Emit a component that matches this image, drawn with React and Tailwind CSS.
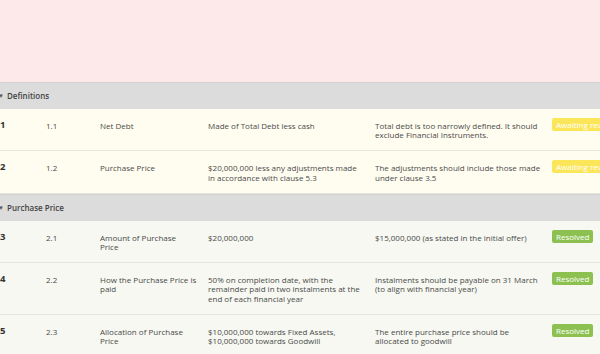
const groups = [
  {
    title: 'Definitions',
    tone: 'bg-[#fffdf0]',
    rows: [
      { n: 1, ref: '1.1', name: 'Net Debt', desc: 'Made of Total Debt less cash', comment: 'Total debt is too narrowly defined. It should exclude Financial Instruments.', status: 'awaiting' },
      { n: 2, ref: '1.2', name: 'Purchase Price', desc: '$20,000,000 less any adjustments made in accordance with clause 5.3', comment: 'The adjustments should include those made under clause 3.5', status: 'awaiting' },
    ],
  },
  {
    title: 'Purchase Price',
    tone: 'bg-[#f6f8f1]',
    rows: [
      { n: 3, ref: '2.1', name: 'Amount of Purchase\nPrice', desc: '$20,000,000', comment: '$15,000,000 (as stated in the initial offer)', status: 'resolved' },
      { n: 4, ref: '2.2', name: 'How the Purchase Price is\npaid', desc: '50% on completion date, with the remainder paid in two instalments at the end of each financial year', comment: 'Instalments should be payable on 31 March (to align with financial year)', status: 'resolved' },
      { n: 5, ref: '2.3', name: 'Allocation of Purchase\nPrice', desc: '$10,000,000 towards Fixed Assets, $10,000,000 towards Goodwill', comment: 'The entire purchase price should be allocated to goodwill', status: 'resolved' },
    ],
  },
]

export default function App() {
  return (
    <div className="w-[600px] h-[354px] overflow-hidden bg-[#fde9e9] text-[#4a4a4a] font-['Open_Sans',sans-serif]">
      <div className="h-[82px]" />
      {groups.map(g => (
        <div key={g.title}>
          <div className="h-[27px] flex items-center bg-[#dcdcdc] border-t border-[#d2d2d2] text-[8px] font-semibold text-[#444]">
            <span className="w-[7px] text-[6px] leading-none -ml-[2px] text-[#555]">▼</span>
            <span className="ml-[2px]">{g.title}</span>
          </div>
          {g.rows.map(r => (
            <div key={r.n} className={`grid grid-cols-[46px_54px_108px_167px_177px_1fr] ${g.tone} border-b border-[#e6e6dc] pt-[12px] pb-[11px] text-[8px] leading-[9.2px]`}>
              <div className="text-[9.5px] font-bold text-[#333] -mt-[1px]">{r.n}</div>
              <div>{r.ref}</div>
              <div className="whitespace-pre-line">{r.name}</div>
              <div className="pr-[14px]">{r.desc}</div>
              <div className="max-w-[166px]">{r.comment}</div>
              <div className="-mt-[3px]">
                <Badge status={r.status} />
              </div>
            </div>
          ))}
        </div>
      ))}
    </div>
  )
}

function Badge({ status }) {
  if (status === 'resolved') {
    return (
      <span className="inline-block whitespace-nowrap rounded-[2px] bg-[#8cc152] text-white text-[8px] leading-[13px] px-[4px]">
        Resolved
      </span>
    )
  }
  return (
    <span className="inline-block whitespace-nowrap rounded-[2px] bg-[#fbe65a] text-white text-[8px] leading-[13px] px-[4px]">
      Awaiting review
    </span>
  )
}
